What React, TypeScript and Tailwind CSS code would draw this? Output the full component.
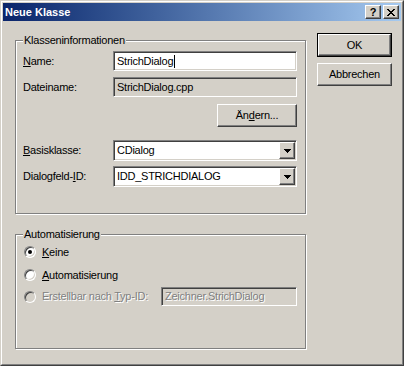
import type { ReactNode } from 'react';

const raised =
  'border border-t-white border-l-white border-r-[#404040] border-b-[#404040] shadow-[inset_-1px_-1px_0_#808080]';
const sunken =
  'border border-t-[#808080] border-l-[#808080] border-r-white border-b-white shadow-[inset_1px_1px_0_#404040,inset_-1px_-1px_0_#d4d0c8]';
const disabledText = 'text-[#808080] [text-shadow:1px_1px_0_#fff]';

function PushButton({
  children,
  isDefault = false,
  className = '',
}: {
  children: ReactNode;
  isDefault?: boolean;
  className?: string;
}) {
  const face = (
    <div className={`flex h-full w-full items-center justify-center bg-[#d4d0c8] ${raised}`}>
      {children}
    </div>
  );
  return isDefault ? (
    <div className={`border border-black ${className}`}>{face}</div>
  ) : (
    <div className={className}>{face}</div>
  );
}

function GroupBox({
  title,
  className = '',
  children,
}: {
  title: string;
  className?: string;
  children: ReactNode;
}) {
  return (
    <div
      className={`relative border border-[#808080] shadow-[inset_1px_1px_0_#fff,1px_1px_0_#fff] ${className}`}
    >
      <span className="absolute -top-[7px] left-[7px] bg-[#d4d0c8] px-[1px] leading-[13px]">
        {title}
      </span>
      {children}
    </div>
  );
}

function Combo({ value }: { value: string }) {
  return (
    <div className={`flex h-[21px] w-[184px] items-center bg-white p-[1px] ${sunken}`}>
      <span className="flex-1 pl-[2px]">{value}</span>
      <div className={`flex h-full w-[16px] items-center justify-center bg-[#d4d0c8] ${raised}`}>
        <svg width="7" height="4" shapeRendering="crispEdges">
          <rect x="0" y="0" width="7" height="1" fill="#000" />
          <rect x="1" y="1" width="5" height="1" fill="#000" />
          <rect x="2" y="2" width="3" height="1" fill="#000" />
          <rect x="3" y="3" width="1" height="1" fill="#000" />
        </svg>
      </div>
    </div>
  );
}

function Radio({ checked = false, disabled = false }: { checked?: boolean; disabled?: boolean }) {
  return (
    <div
      className={`flex h-[12px] w-[12px] shrink-0 items-center justify-center rounded-full border border-t-[#808080] border-l-[#808080] border-r-white border-b-white shadow-[inset_1px_1px_0_#404040,inset_-1px_-1px_0_#d4d0c8] ${
        disabled ? 'bg-[#d4d0c8]' : 'bg-white'
      }`}
    >
      {checked && <div className="h-[4px] w-[4px] rounded-full bg-black" />}
    </div>
  );
}

function TitleButton({ children }: { children: ReactNode }) {
  return (
    <div className={`flex h-[14px] w-[16px] items-center justify-center bg-[#d4d0c8] ${raised}`}>
      {children}
    </div>
  );
}

export default function App() {
  return (
    <div className="h-[366px] w-[404px] overflow-hidden bg-[#d4d0c8] font-['Liberation_Sans',Arial,sans-serif] text-[11px] leading-[13px] tracking-[-0.25px] text-black">
      <div className="h-full w-full border border-t-[#d4d0c8] border-l-[#d4d0c8] border-r-[#404040] border-b-[#404040]">
        <div className="h-full w-full border border-t-white border-l-white border-r-[#808080] border-b-[#808080] p-[1px]">
          {/* title bar */}
          <div className="flex h-[18px] items-center bg-gradient-to-r from-[#0a246a] to-[#a6caf0] pr-[2px] pl-[2px]">
            <span className="flex-1 text-[11px] font-bold tracking-normal text-white">Neue Klasse</span>
            <div className="flex gap-[2px]">
              <TitleButton>
                <span className="text-[11px] font-bold leading-[11px]">?</span>
              </TitleButton>
              <TitleButton>
                <svg width="8" height="7" shapeRendering="crispEdges">
                  <path
                    d="M0 0h2v1h-2zM6 0h2v1h-2zM1 1h2v1h-2zM5 1h2v1h-2zM2 2h4v1h-4zM3 3h2v1h-2zM2 4h4v1h-4zM1 5h2v1h-2zM5 5h2v1h-2zM0 6h2v1h-2zM6 6h2v1h-2z"
                    fill="#000"
                  />
                </svg>
              </TitleButton>
            </div>
          </div>

          <div className="flex">
            <div className="ml-[12px] flex flex-col">
              <GroupBox title="Klasseninformationen" className="mt-[19px] h-[174px] w-[291px]">
                <div className="flex flex-col pl-[7px]">
                  <div className="mt-[10px] flex h-[20px] items-center">
                    <span className="w-[90px]">
                      <u>N</u>ame:
                    </span>
                    <div className={`flex h-[20px] w-[184px] items-center bg-white pl-[3px] ${sunken}`}>
                      <span>StrichDialog</span>
                      <span className="ml-[1px] h-[13px] w-[1px] bg-black" />
                    </div>
                  </div>
                  <div className="mt-[6px] flex h-[20px] items-center">
                    <span className="w-[90px]">Dateiname:</span>
                    <div className={`flex h-[20px] w-[184px] items-center bg-[#d4d0c8] pl-[3px] ${sunken}`}>
                      StrichDialog.cpp
                    </div>
                  </div>
                  <div className="mt-[7px] flex w-[274px] justify-end">
                    <PushButton className="h-[23px] w-[80px]">
                      Än<u>d</u>ern...
                    </PushButton>
                  </div>
                  <div className="mt-[13px] flex h-[21px] items-center">
                    <span className="w-[90px]">
                      <u>B</u>asisklasse:
                    </span>
                    <Combo value="CDialog" />
                  </div>
                  <div className="mt-[5px] flex h-[21px] items-center">
                    <span className="w-[90px]">
                      Dialogfeld-<u>I</u>D:
                    </span>
                    <Combo value="IDD_STRICHDIALOG" />
                  </div>
                </div>
              </GroupBox>

              <GroupBox title="Automatisierung" className="mt-[20px] h-[115px] w-[291px]">
                <div className="flex flex-col pr-[8px] pl-[8px]">
                  <div className="mt-[9px] flex h-[16px] items-center gap-[6px]">
                    <Radio checked />
                    <span>
                      <u>K</u>eine
                    </span>
                  </div>
                  <div className="mt-[7px] flex h-[16px] items-center gap-[6px]">
                    <Radio />
                    <span>
                      <u>A</u>utomatisierung
                    </span>
                  </div>
                  <div className="mt-[4px] flex h-[19px] items-center gap-[6px]">
                    <Radio disabled />
                    <span className={`flex-1 ${disabledText}`}>
                      Erstellbar nach <u>T</u>yp-ID:
                    </span>
                    <div
                      className={`flex h-[19px] w-[136px] items-center bg-[#d4d0c8] pl-[3px] ${sunken} ${disabledText}`}
                    >
                      Zeichner.StrichDialog
                    </div>
                  </div>
                </div>
              </GroupBox>
            </div>

            <div className="mt-[12px] ml-[11px] flex flex-col">
              <PushButton isDefault className="h-[24px] w-[75px]">
                OK
              </PushButton>
              <PushButton className="mt-[6px] h-[23px] w-[75px]">Abbrechen</PushButton>
            </div>
          </div>
        </div>
      </div>
    </div>
  );
}
